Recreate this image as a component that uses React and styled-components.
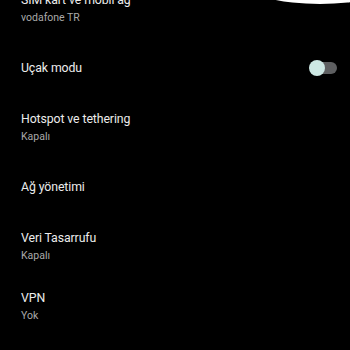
import React from "react";
import styled, { createGlobalStyle } from "styled-components";

const GlobalStyle = createGlobalStyle`
  html, body {
    margin: 0;
    padding: 0;
    background: #000;
  }
  body {
    font-family: Roboto, "Noto Sans", sans-serif;
    overflow: hidden;
  }
`;

const Screen = styled.div`
  position: relative;
  width: 350px;
  height: 350px;
  overflow: hidden;
  background: #000;
`;

const List = styled.div`
  display: flex;
  flex-direction: column;
  margin-top: -21px;
`;

const Row = styled.div`
  height: 59.5px;
  display: flex;
  align-items: center;
  justify-content: space-between;
  padding: 0 12px 0 21px;
`;

const Texts = styled.div`
  display: flex;
  flex-direction: column;
  gap: 3px;
`;

const Title = styled.div`
  color: #ececec;
  font-size: 12.3px;
  letter-spacing: -0.1px;
  line-height: 16px;
`;

const Subtitle = styled.div`
  color: #a9a9a9;
  font-size: 10.5px;
  line-height: 14px;
`;

const Track = styled.div`
  position: relative;
  width: 25px;
  height: 12px;
  border-radius: 6px;
  background: #5e5f61;
  margin-right: 1px;
`;

const Thumb = styled.div`
  position: absolute;
  left: -3px;
  top: -2px;
  width: 16px;
  height: 16px;
  border-radius: 50%;
  background: #cde8e4;
`;

const Blob = styled.svg`
  position: absolute;
  top: 0;
  right: 0;
  filter: blur(0.5px);
`;

const items = [
  { title: "SIM kart ve mobil ağ", sub: "vodafone TR" },
  { title: "Uçak modu", toggle: true },
  { title: "Hotspot ve tethering", sub: "Kapalı" },
  { title: "Ağ yönetimi" },
  { title: "Veri Tasarrufu", sub: "Kapalı" },
  { title: "VPN", sub: "Yok" },
  { title: "Özel DNS" },
];

export default function App() {
  return (
    <>
      <GlobalStyle />
      <Screen>
        <List>
          {items.map((it) => (
            <Row key={it.title}>
              <Texts>
                <Title>{it.title}</Title>
                {it.sub && <Subtitle>{it.sub}</Subtitle>}
              </Texts>
              {it.toggle && (
                <Track>
                  <Thumb />
                </Track>
              )}
            </Row>
          ))}
        </List>
        <Blob width="90" height="10" viewBox="0 0 90 10">
          <ellipse cx="60" cy="-15" rx="72" ry="19" fill="#fff" />
        </Blob>
      </Screen>
    </>
  );
}
